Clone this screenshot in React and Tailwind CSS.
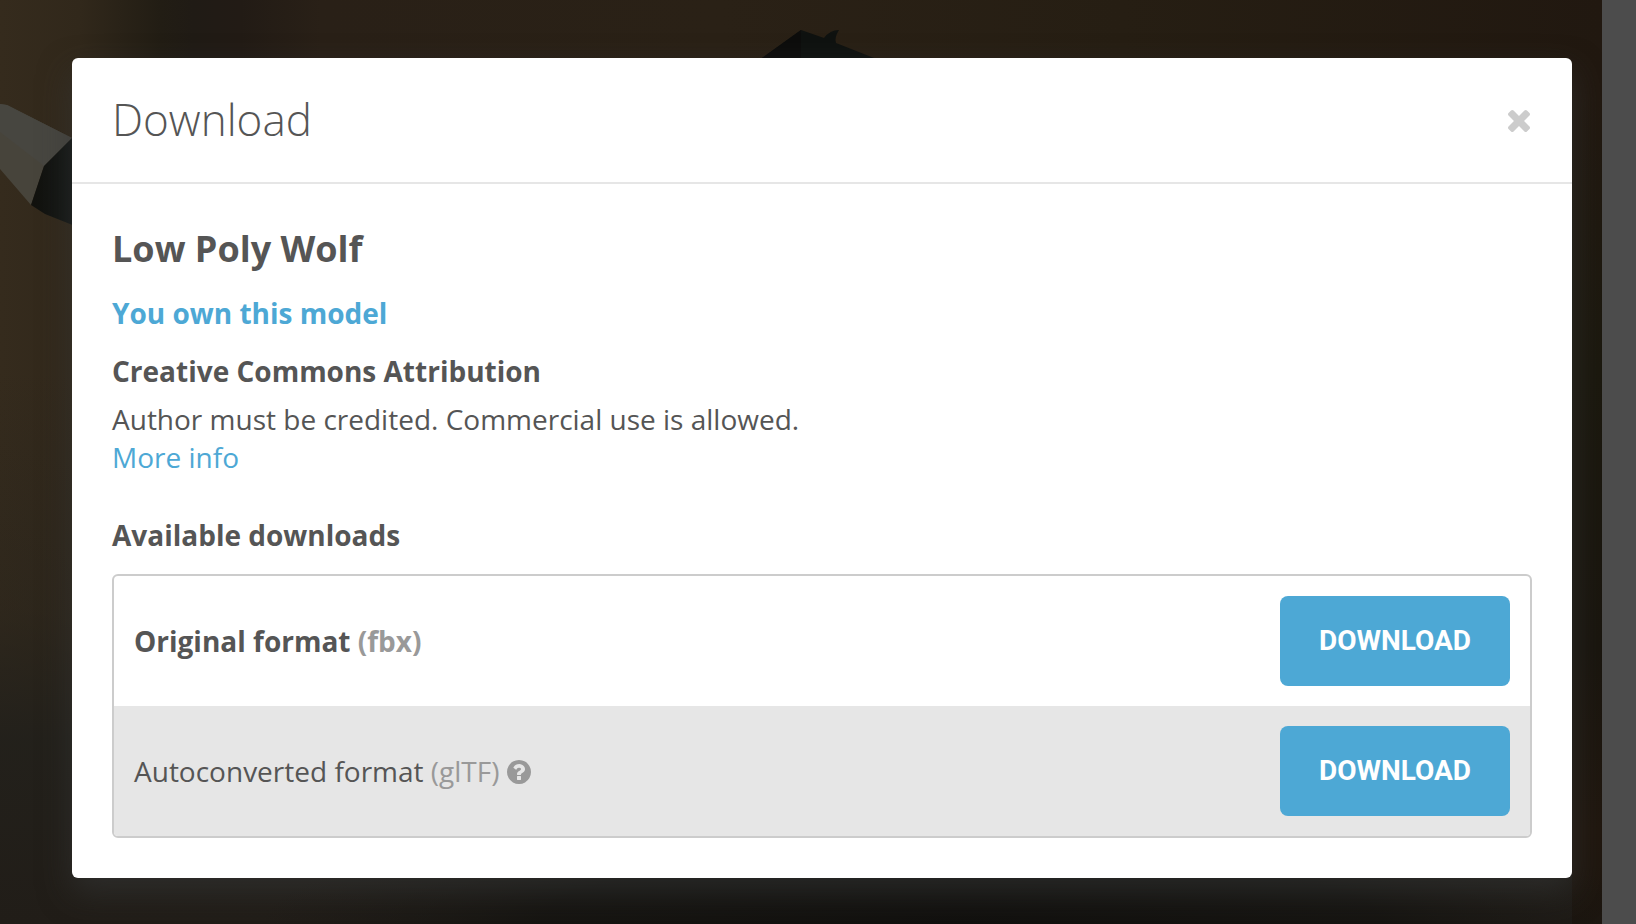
function Scene() {
  return (
    <svg
      className="absolute inset-0 h-full w-full"
      viewBox="0 0 1602 924"
      preserveAspectRatio="xMinYMin slice"
      aria-hidden="true"
    >
      <defs>
        <linearGradient id="top" x1="0" x2="1" y1="0" y2="0">
          <stop offset="0" stopColor="#352b1d" />
          <stop offset="0.05" stopColor="#31281b" />
          <stop offset="0.1" stopColor="#221d14" />
          <stop offset="0.12" stopColor="#201b15" />
          <stop offset="0.15" stopColor="#221b15" />
          <stop offset="0.2" stopColor="#292017" />
          <stop offset="0.45" stopColor="#2a2116" />
          <stop offset="0.7" stopColor="#261e13" />
          <stop offset="1" stopColor="#211810" />
        </linearGradient>
        <linearGradient id="shade" x1="0" x2="0" y1="0" y2="1">
          <stop offset="0.4" stopColor="#22201b" stopOpacity="0" />
          <stop offset="0.66" stopColor="#22201b" stopOpacity="0.35" />
          <stop offset="0.8" stopColor="#22201b" stopOpacity="0.95" />
          <stop offset="1" stopColor="#211d18" />
        </linearGradient>
        <linearGradient id="right" x1="0" x2="0" y1="0" y2="1">
          <stop offset="0.1" stopColor="#1b180e" stopOpacity="0" />
          <stop offset="0.4" stopColor="#1b180e" />
          <stop offset="0.7" stopColor="#19150e" />
          <stop offset="0.9" stopColor="#20170f" />
          <stop offset="1" stopColor="#1d160f" />
        </linearGradient>
        <radialGradient id="floor">
          <stop offset="0" stopColor="#11100e" />
          <stop offset="0.6" stopColor="#141310" stopOpacity="0.85" />
          <stop offset="1" stopColor="#181613" stopOpacity="0" />
        </radialGradient>
        <linearGradient id="fur" x1="0" x2="1" y1="0" y2="0">
          <stop offset="0" stopColor="#12120e" />
          <stop offset="1" stopColor="#141817" />
        </linearGradient>
      </defs>
      <rect width="1602" height="924" fill="url(#top)" />
      <rect width="1602" height="924" fill="url(#shade)" />
      <rect x="1572" width="30" height="924" fill="url(#right)" />
      <ellipse cx="960" cy="924" rx="700" ry="120" fill="url(#floor)" />
      <path d="M0 104 7 105 72 138 44 166 31 205 0 169Z" fill="#47443b" />
      <path d="M0 104 7 105 72 138 44 166 0 132Z" fill="#474640" />
      <path d="M72 138 44 166 31 205 45 214 80 228V132Z" fill="url(#fur)" />
      <path d="M762 58 801 30 824 38Q830 30 839 30 834 38 836 43L874 58Z" fill="#0f1210" />
      <path d="M762 58 801 30V58Z" fill="#0d0d0c" />
    </svg>
  );
}

function CloseIcon() {
  return (
    <svg className="w-[22px]" viewBox="110 366 1188 1188" fill="currentColor" aria-hidden="true">
      <path d="M1298 1322q0 40-28 68l-136 136q-28 28-68 28t-68-28l-294-294-294 294q-28 28-68 28t-68-28l-136-136q-28-28-28-68t28-68l294-294-294-294q-28-28-28-68t28-68l136-136q28-28 68-28t68 28l294 294 294-294q28-28 68-28t68 28l136 136q28 28 28 68t-28 68l-294 294 294 294q28 28 28 68z" />
    </svg>
  );
}

function HelpIcon() {
  return (
    <svg
      className="inline size-6 align-[-2px] text-[#999]"
      viewBox="128 128 1536 1536"
      fill="currentColor"
      aria-hidden="true"
    >
      <path d="M1024 1376v-192q0-14-9-23t-23-9h-192q-14 0-23 9t-9 23v192q0 14 9 23t23 9h192q14 0 23-9t9-23zm256-672q0-88-55.500-163t-138.500-116-170-41q-243 0-371 213-15 24 8 42l132 100q7 6 19 6 16 0 25-12 53-68 86-92 34-24 86-24 48 0 85.500 26t37.500 59q0 38-20 61t-68 45q-63 28-115.500 86.500t-52.500 125.500v36q0 14 9 23t23 9h192q14 0 23-9t9-23q0-19 21.500-49.500t54.500-49.500q32-18 49-28.500t46-35 44.500-48 28-60.500 12.500-81zm384 192q0 209-103 385.500t-279.500 279.500-385.500 103-385.500-103-279.500-279.500-103-385.500 103-385.500 279.500-279.500 385.500-103 385.500 103 279.500 279.500 103 385.500z" />
    </svg>
  );
}

function DownloadRow({ children, className }) {
  return (
    <li className={`flex items-center justify-between gap-5 p-5 ${className}`}>
      <p>{children}</p>
      <button
        type="button"
        className="h-[90px] w-[230px] shrink-0 cursor-pointer rounded-lg bg-[#4da8d5] font-[Roboto,sans-serif] text-[28px] font-bold text-white"
      >
        DOWNLOAD
      </button>
    </li>
  );
}

export default function App() {
  return (
    <div className="flex min-h-screen bg-[#4c4c4c] font-['Open_Sans',sans-serif] text-[28px] leading-[38px] text-[#555]">
      <main className="relative grow overflow-hidden bg-[#211810] pt-[58px] pr-[30px] pb-[46px] pl-[72px]">
        <Scene />
        <section
          role="dialog"
          aria-labelledby="dialog-title"
          className="relative rounded-md bg-white shadow-[0_14px_32px_rgba(54,55,55,0.6)]"
        >
          <header className="flex items-center justify-between border-b-2 border-[#e6e6e6] px-10 pt-[31px] pb-[33px]">
            <h1 id="dialog-title" className="text-[44px] leading-[60px] font-light">
              Download
            </h1>
            <button type="button" aria-label="Close" className="cursor-pointer pt-1 pr-0.5 text-[#ccc]">
              <CloseIcon />
            </button>
          </header>
          <div className="p-10">
            <h2 className="text-[36px] leading-[50px] font-bold">Low Poly Wolf</h2>
            <p className="mt-5 font-bold text-[#4da8d5]">You own this model</p>
            <h3 className="mt-5 font-bold">Creative Commons Attribution</h3>
            <p className="mt-2.5">Author must be credited. Commercial use is allowed.</p>
            <a href="#license" className="block text-[#4da8d5]">
              More info
            </a>
            <h3 className="mt-10 font-bold">Available downloads</h3>
            <ul className="mt-5 overflow-hidden rounded-md border-2 border-[#ccc]">
              <DownloadRow className="font-bold">
                Original format <span className="text-[#999]">(fbx)</span>
              </DownloadRow>
              <DownloadRow className="bg-[#e6e6e6]">
                Autoconverted format <span className="text-[#999]">(glTF)</span> <HelpIcon />
              </DownloadRow>
            </ul>
          </div>
        </section>
      </main>
      <div className="w-[34px] shrink-0" />
    </div>
  );
}
